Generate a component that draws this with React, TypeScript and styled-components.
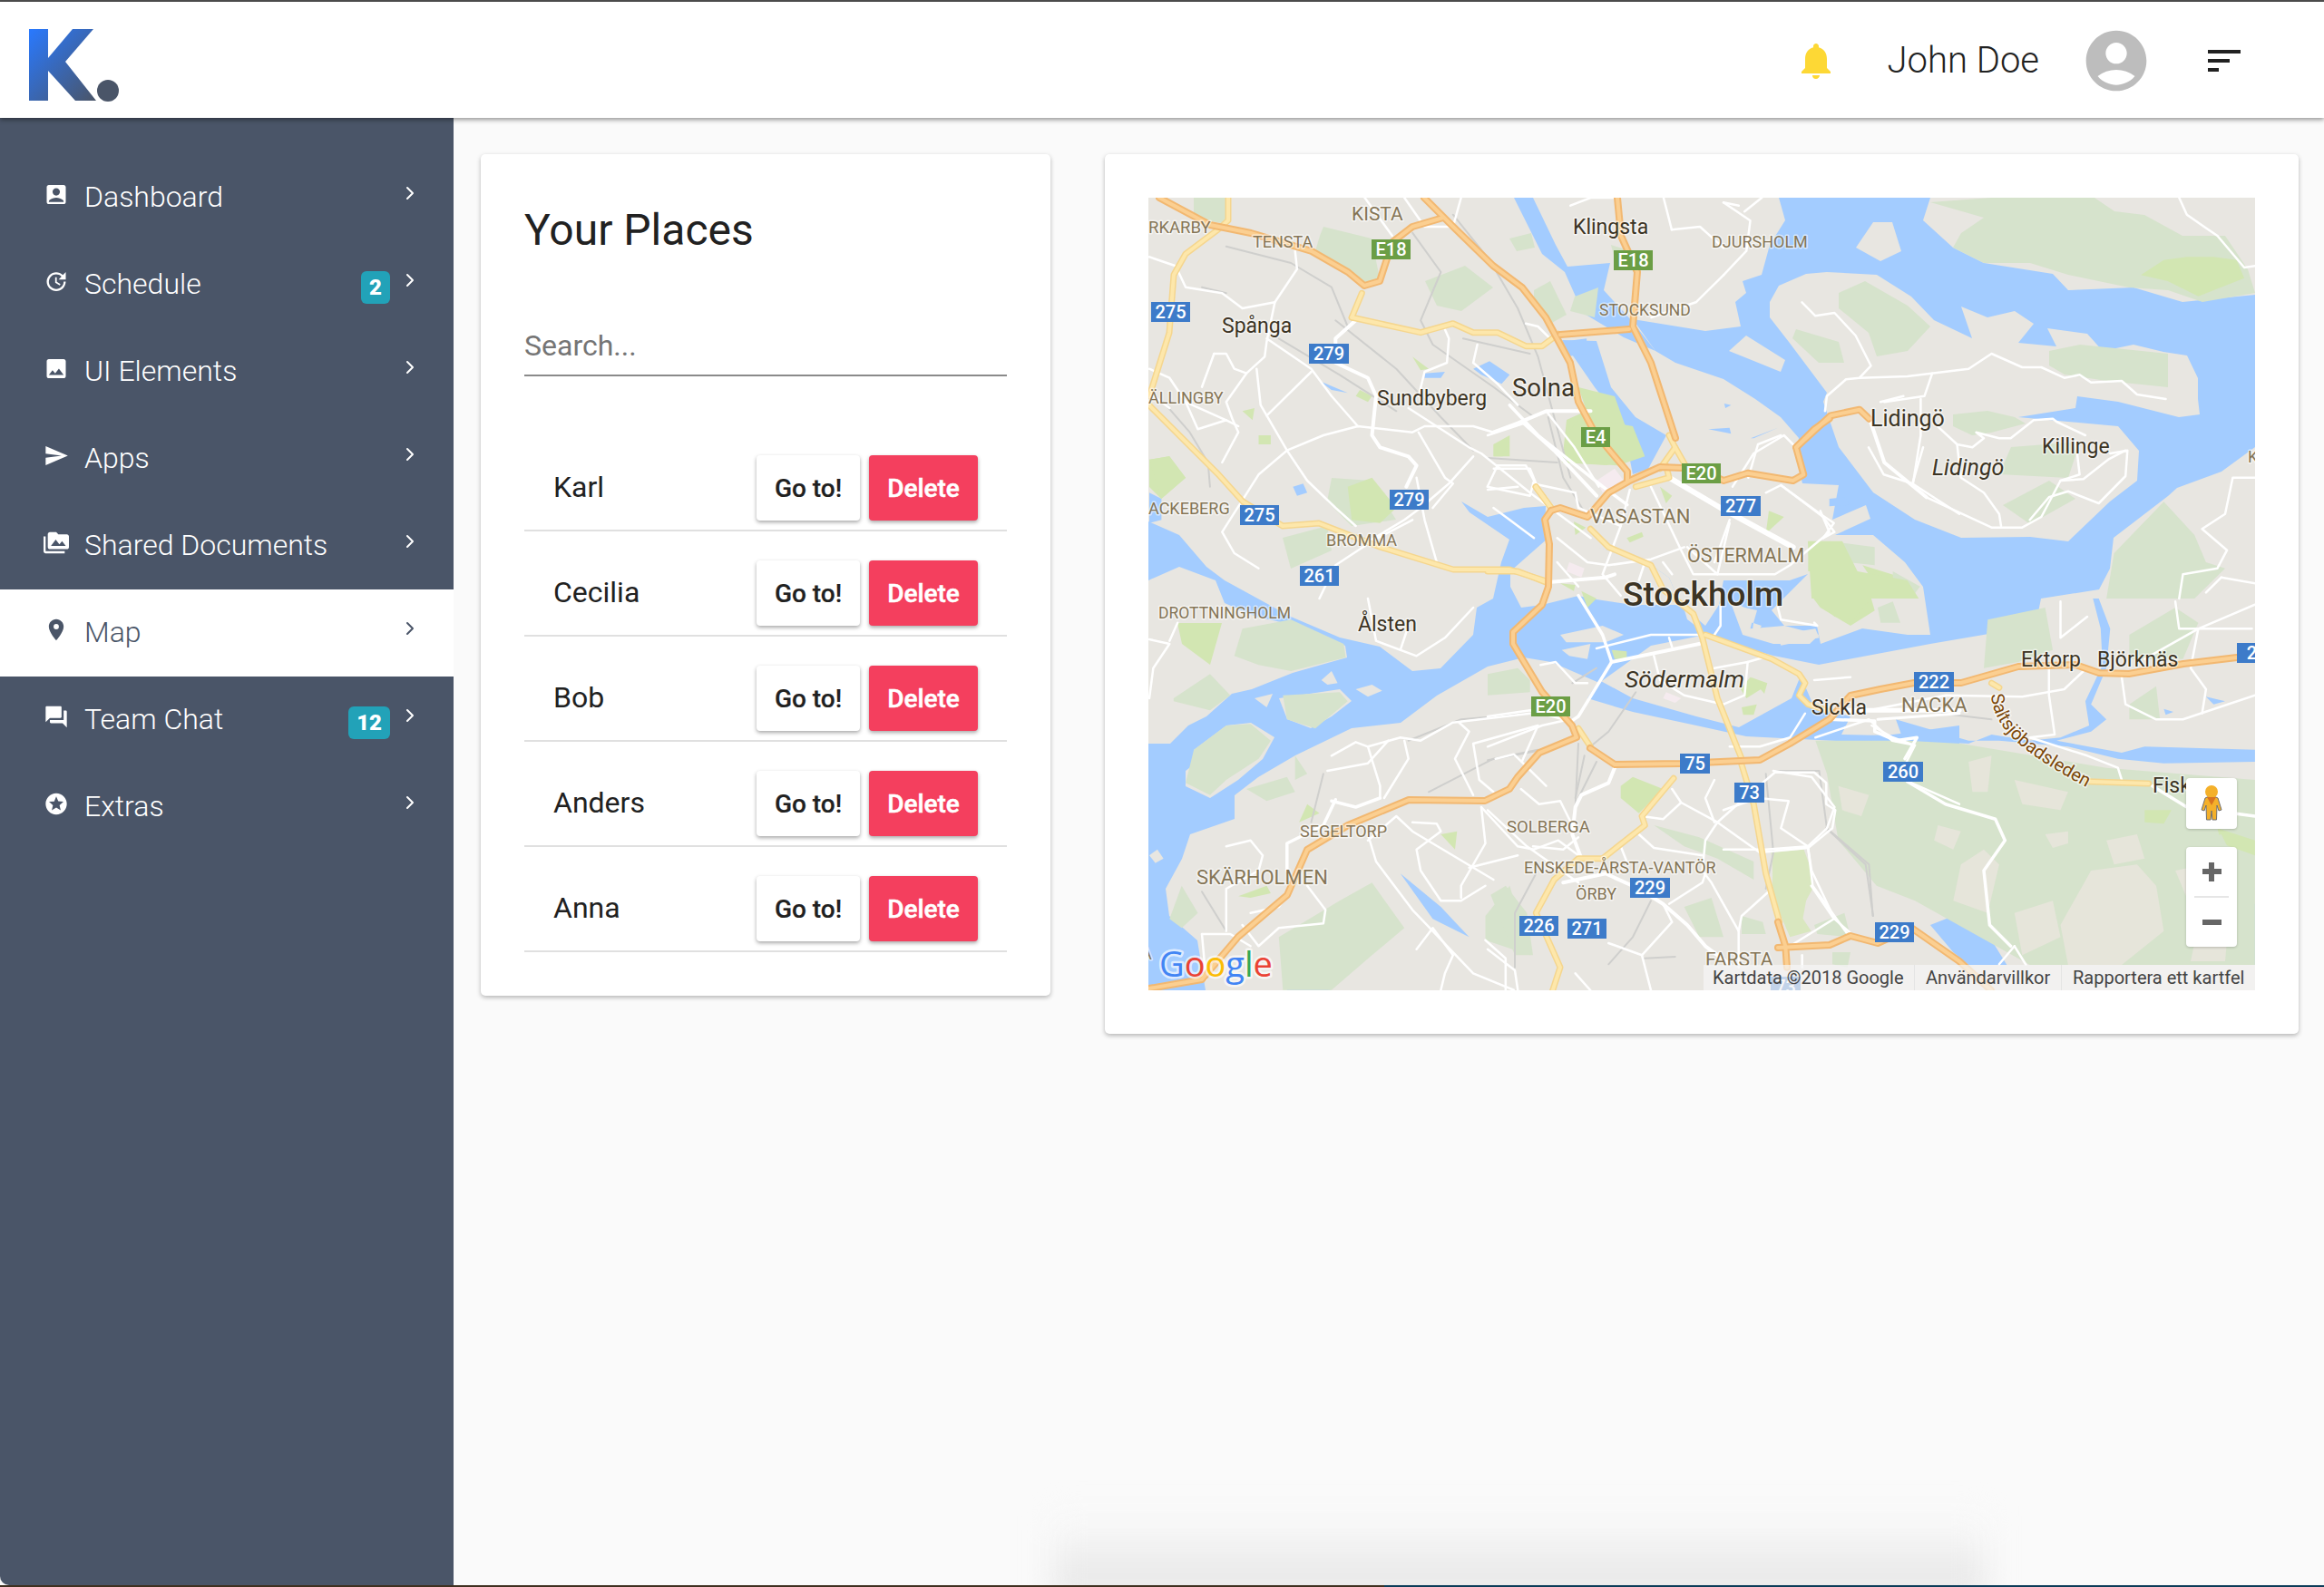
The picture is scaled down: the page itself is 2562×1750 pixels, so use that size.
import React from "react";
import styled, { createGlobalStyle } from "styled-components";
import {
  MdAccountBox, MdUpdate, MdPhoto, MdSend, MdPermMedia, MdPlace, MdForum, MdStars,
  MdNotifications, MdAccountCircle, MdSort,
} from "react-icons/md";
import { ChevronRight } from "lucide-react";

const GlobalStyle = createGlobalStyle`
  html, body { margin: 0; padding: 0; background: #fafafa; }
  body { font-family: Roboto, "Liberation Sans", sans-serif; color: #212121; }
  * { box-sizing: border-box; }
`;

const Page = styled.div`
  width: 2562px; height: 1750px; display: flex; flex-direction: column;
  overflow: hidden; position: relative; background: #fafafa;
`;
const TopLine = styled.div`height: 2px; background: #4f4f4f; flex: none;`;
const Header = styled.header`
  height: 128px; flex: none; background: #fff; display: flex; align-items: center;
  padding: 0 86px 0 32px; position: relative; z-index: 3;
  box-shadow: 0 2px 5px rgba(0,0,0,.42);
`;
const Logo = styled.svg`width: 100px; height: 128px; flex: none; margin-top: 3px;`;
const HeaderRight = styled.div`margin-left: auto; display: flex; align-items: center;`;
const BellIcon = styled(MdNotifications)`color: #fdd835; font-size: 48px; margin-right: 55px; margin-top: 2px;`;
const UserName = styled.span`font-size: 40px; font-weight: 300; color: #212121; margin-right: 45px; line-height: 48px; padding-top: 2px;`;
const AvatarIcon = styled(MdAccountCircle)`color: #bdbdbd; font-size: 80px; margin-right: 55px; margin-top: 2px;`;
const SortIcon = styled(MdSort)`color: #212121; font-size: 48px; margin-top: 2px;`;

const Body = styled.div`flex: 1; display: flex; min-height: 0;`;
const Sidebar = styled.nav`
  width: 500px; flex: none; background: #4a5568; padding-top: 40px;
  border-bottom-left-radius: 10px;
`;
const NavRow = styled.div<{ $active?: boolean }>`
  height: 96px; display: flex; align-items: center; padding: 0 36px 2px 48px;
  background: ${(p) => (p.$active ? "#fff" : "transparent")};
  color: ${(p) => (p.$active ? "#4a5568" : "#fff")};
`;
const NavIcon = styled.span`
  width: 28px; display: flex; justify-content: center; margin-right: 17px; margin-top: -6px; flex: none;
  font-size: 29px;
`;
const NavLabel = styled.span`font-size: 32px; font-weight: 300; flex: 1; line-height: 40px; white-space: nowrap;`;
const Badge = styled.span`
  height: 36px; min-width: 32px; padding: 0 9px; border-radius: 6px; background: #22a2b8; color: #fff;
  font-size: 24px; font-weight: 900; display: flex; align-items: center; justify-content: center;
  margin-right: 10px; margin-top: 7px;
`;
const Chevron = styled(ChevronRight)`flex: none; margin-top: -8px;`;

const Main = styled.main`
  flex: 1; position: relative; overflow: hidden; display: flex; align-items: flex-start;
  gap: 60px; padding: 40px 0 0 30px;
`;
const DockShadow = styled.div`
  position: absolute; left: 660px; bottom: -14px; width: 1030px; height: 90px;
  background: linear-gradient(to top, #e4e4e4, #fafafa); filter: blur(16px);
`;
const Card = styled.section<{ $w: number }>`
  width: ${(p) => p.$w}px; flex: none; background: #fff; padding: 48px; border-radius: 5px;
  box-shadow: 0 2px 5px rgba(0,0,0,.28); position: relative;
`;
const Title = styled.h2`margin: 8px 0 0; font-size: 48px; font-weight: 400; line-height: 56px; color: #212121;`;
const Search = styled.input`
  display: block; width: 100%; margin-top: 80px; height: 53px; padding: 0 0 13px; border: 0;
  border-bottom: 2px solid #8a8a8a; font: 300 32px/38px Roboto, sans-serif; outline: none; background: transparent;
  &::placeholder { color: #757575; opacity: 1; font-weight: 400; }
`;
const List = styled.div`margin-top: 55px;`;
const Row = styled.div`
  height: 116px; padding: 32px 32px 10px; display: flex; align-items: center;
  border-bottom: 2px solid #e0e0e0;
`;
const Name = styled.span`flex: 1; font-size: 32px; font-weight: 400; color: #212121; margin-top: -2px;`;
const Btn = styled.button<{ $danger?: boolean }>`
  height: 72px; width: ${(p) => (p.$danger ? 120 : 114)}px; border: 0; border-radius: 4px; padding: 0;
  margin-left: ${(p) => (p.$danger ? 10 : 0)}px;
  font: 500 28px Roboto, sans-serif;
  -webkit-text-stroke: ${(p) => (p.$danger ? ".5px" : ".2px")};
  background: ${(p) => (p.$danger ? "#f43f5e" : "#fff")};
  color: ${(p) => (p.$danger ? "#fff" : "#212121")};
  box-shadow: 0 2px 4px rgba(0,0,0,.35);
`;

const MapFrame = styled.div`width: 1220px; height: 874px; position: relative; overflow: hidden; background: #e8e6e1;`;
const MapSvg = styled.svg`display: block; width: 1220px; height: 874px;`;
const Poly = styled.polygon<{ $c: string }>`fill: ${(p) => p.$c};`;
const Road = styled.polyline<{ $c: string; $w: number }>`
  fill: none; stroke: ${(p) => p.$c}; stroke-width: ${(p) => p.$w}; stroke-linejoin: round; stroke-linecap: round;
`;
const Label = styled.text<{ $size: number; $brown?: boolean; $italic?: boolean; $bold?: boolean }>`
  font-family: Roboto, sans-serif; font-size: ${(p) => p.$size}px;
  font-style: ${(p) => (p.$italic ? "italic" : "normal")};
  font-weight: ${(p) => (p.$bold ? 500 : 400)};
  fill: ${(p) => (p.$brown ? "#857556" : "#3c3424")};
  paint-order: stroke; stroke: rgba(255,255,255,.55); stroke-width: 3px; stroke-linejoin: round;
`;
const ShieldBox = styled.rect<{ $green?: boolean }>`fill: ${(p) => (p.$green ? "#6b9e45" : "#3d7bc9")};`;
const ShieldText = styled.text`
  font-family: Roboto, sans-serif; font-size: 20px; font-weight: 500; fill: #fff; text-anchor: middle;
`;
const RouteLabel = styled.text`
  font-family: Roboto, sans-serif; font-size: 20px; fill: #7a4608;
  paint-order: stroke; stroke: rgba(255,255,255,.6); stroke-width: 3px;
`;
const GoogleMark = styled.text`
  font-family: "Open Sans", Roboto, sans-serif; font-size: 38px; font-weight: 400;
  paint-order: stroke; stroke: rgba(255,255,255,.65); stroke-width: 5px; stroke-linejoin: round;
`;
const Attribution = styled.div`
  position: absolute; right: 0; bottom: 0; width: 608px; height: 28px; background: rgba(245,245,245,.72);
  display: flex; align-items: center; font-size: 20px; color: #444; white-space: nowrap;
`;
const AttrItem = styled.span<{ $w: number; $last?: boolean }>`
  width: ${(p) => p.$w}px; padding-left: ${(p) => (p.$w === 233 ? 10 : 12)}px; line-height: 28px;
  border-right: ${(p) => (p.$last ? "0" : "1px solid #e4e4e4")};
`;
const MapControl = styled.div`
  position: absolute; right: 20px; width: 56px; background: #fff; border-radius: 4px;
  box-shadow: 0 1px 3px rgba(0,0,0,.2); display: flex; flex-direction: column; align-items: center;
`;
const PegBox = styled(MapControl)`top: 640px; height: 56px; justify-content: center;`;
const ZoomBox = styled(MapControl)`top: 716px; height: 110px;`;
const ZoomCell = styled.div`height: 54px; width: 100%; display: flex; align-items: center; justify-content: center; position: relative;`;
const ZoomRule = styled.div`width: 38px; height: 2px; background: #e6e6e6; flex: none;`;
const ZoomBar = styled.span`width: 21px; height: 6px; background: #666; display: block;`;
const ZoomBarV = styled.span`width: 6px; height: 21px; background: #666; display: block; position: absolute;`;

const BottomStrip = styled.div`height: 2px; flex: none; display: flex;`;
const StripDesk = styled.div`width: 1526px; background: #3f3020;`;
const StripTeal = styled.div`flex: 1; background: #0c3c58;`;

/* map coordinate helpers: every source list is given in a local sketch space and mapped into page space */
const conv = (ox: number, oy: number, sx: number, sy: number) => (s: string) =>
  s.trim().split(/\s+/).map((p) => {
    const [x, y] = p.split(",").map(Number);
    return `${(ox + x / sx).toFixed(1)},${(oy + y / sy).toFixed(1)}`;
  }).join(" ");
const A = conv(1200, 160, 2.24, 3);
const B = conv(1900, 160, 2.369, 3);
const C = conv(1200, 660, 2.24, 3);
const D = conv(1900, 660, 2.369, 3);
const E = conv(1640, 460, 3, 3);
const F = conv(1640, 800, 3, 3);

const WATER = "#a3ccff";
const LAND = "#e8e6e1";
const PARK = "#d6e3cc";
const BRIGHT = "#d2e6b2";
const PATCH = "#e6e5da";

const water = [
  "1961,218 2128,218 2120,243 2153,273 2187,290 2263,302 2280,320 2352,317 2406,333 2486,325 2486,493 2449,520 2400,538 2390,547 2330,593 2326,627 2314,650 2250,660 2246,680 2204,697 2128,710 2005,733 1955,723 1870,700 1880,690 1895,667 1900,640 1973,640 1993,633 1953,673 1967,690 2003,690 2007,710 2053,693 2103,700 2128,700 2120,647 2100,620 2065,590 2023,590 2062,572 2057,557 2020,573 2027,535 1987,533 1980,503 1983,483 1963,460 1935,440 1900,418 1847,400 1825,387 1800,352 1880,365 1919,360 1913,333 1925,323 1921,310 1942,303 1951,270 1968,243",
  "1266,575 1300,590 1330,625 1350,640 1423,680 1477,703 1521,713 1557,740 1588,737 1624,700 1628,670 1646,660 1655,620 1664,595 1620,565 1611,553 1640,570 1680,560 1704,558 1703,590 1773,607 1820,623 1840,637 1853,667 1880,690 1880,700 1820,712 1763,753 1710,730 1680,725 1640,735 1584,767 1544,797 1490,803 1428,833 1387,857 1361,877 1361,903 1312,920 1303,947 1285,980 1289,1010 1320,1037 1329,1092 1266,1092",
  "1669,218 1690,218 1715,270 1728,294 1775,290 1768,320 1800,355 1825,387 1790,372 1745,345 1725,300 1700,280",
  "1722,375 1760,376 1776,427 1803,460 1837,480 1817,517 1800,523 1789,467 1758,427",
  "1763,750 1800,770 1870,790 1917,802 1975,770 1985,745 2000,780 2040,790 2030,810 2160,813 2160,830 2045,818 1925,812 1870,800 1800,785 1750,770",
  A("1170,650 1230,640 1230,690 1180,700"),
  A("950,740 990,715 1040,760 1020,790 970,760"),
  A("830,755 880,750 870,770 830,770"),
  A("150,1150 180,1170 180,1240 150,1250"),
  A("505,1130 530,1120 540,1150 515,1160"),
  A("490,1340 530,1320 530,1350 500,1370"),
  A("570,780 640,820 600,810"),
  D("980,0 1010,100 1000,230 960,350 1000,400 960,440 870,470 1040,510 1100,490 1388,500 1388,540 1150,545 1030,530 900,490 720,470 640,470 450,400 470,470 280,460 500,470 640,480 700,450 800,470 880,460 955,420 945,340 990,220 985,100 965,0"),
  D("540,640 600,570 650,640 710,720 650,690 610,660"),
  D("450,600 520,760 530,830 470,790 480,700"),
  D("540,1080 620,1040 700,1130 740,1212 640,1212 600,1170"),
  D("1330,1020 1388,1010 1388,1212 1320,1140"),
  D("585,855 610,860 620,895 590,890"), D("770,860 825,930 800,925"), D("815,1040 850,1040 830,1065"),
  D("1140,1050 1165,1050 1160,1070"), D("1340,890 1388,960 1360,980"), D("1285,780 1305,780 1300,830"),
  D("1260,325 1310,340 1280,350"), D("1150,365 1175,375 1155,385"),
  C("770,910 870,1020 940,1120 850,1060"),
  C("490,1270 600,1295 490,1295"),
  E("1130,270 1180,265 1200,290 1130,295"),
  F("1360,190 1450,380 1460,400 1410,420 1370,360 1430,340 1380,250"),
  F("1420,430 1440,490 1420,470"),
  F("1520,430 1560,440 1560,470 1530,460"),
  F("1470,190 1560,150 1560,240"),
  F("1040,0 1100,40 1340,30 1560,0 1560,50 1350,55 1100,40"),
  B("2,855 20,860 5,870"),
  E("730,40 800,35 805,55"), E("870,70 960,35 880,70"),
];
const lands = [
  "1951,333 1961,315 1991,302 2014,300 2069,303 2107,327 2132,353 2174,373 2162,338 2191,350 2221,343 2242,357 2225,378 2267,382 2257,362 2301,368 2318,387 2352,380 2385,388 2411,392 2423,417 2423,440 2425,457 2402,460 2335,443 2290,437 2288,450 2225,460 2335,470 2358,497 2356,530 2326,553 2280,597 2238,592 2162,593 2111,573 2065,543 2027,493 2010,443 2014,433 1972,377 1951,350",
  "2065,245 2086,245 2096,277 2073,288 2046,273",
  "1906,387 1925,370 1968,397 1963,410 1921,393",
  "1266,640 1300,625 1340,640 1350,665 1385,680 1430,690 1483,712 1485,725 1425,742 1380,760 1358,765 1330,790 1310,800 1290,820 1266,820",
  "1316,827 1352,800 1379,797 1405,813 1392,837 1365,860 1334,880 1307,867 1307,850 1320,840",
  "1410,770 1477,760 1490,773 1468,790 1445,803 1419,793",
  C("575,270 600,240 615,280 590,285"), C("660,300 700,285 725,305 690,325"), C("410,330 455,315 440,360"),
  C("170,830 185,860 165,875 150,850"),
  "1707,593 1665,630 1665,647 1677,670 1700,667 1740,657 1753,660 1800,667 1853,667 1840,637 1820,623 1773,607 1717,590",
  "1857,673 1870,673 1873,693 1860,683",
  "1910,667 1937,673 1933,687 1917,683", "1933,687 1942,690 1937,698 1932,695", "1960,700 1973,697 1975,708 1965,708",
  E("240,720 380,690 450,720 390,745 260,745"), E("245,770 340,750 330,800 270,790"),
  D("15,0 80,50 70,100 160,90 250,120 225,150 130,150 50,120"),
  D("140,120 240,100 250,130 150,155"),
];
const parks: [string, string][] = [
  ["2128,223 2195,218 2309,218 2331,233 2364,237 2406,260 2453,260 2478,297 2486,323 2428,333 2390,320 2347,317 2280,303 2238,290 2187,290 2153,273 2162,257 2187,240", PARK],
  ["2027,323 2056,310 2103,337 2128,360 2103,387 2069,393 2060,367 2027,340", PARK],
  ["1980,363 2027,377 2033,400 2005,400 1976,373", PARK],
  ["2259,387 2293,380 2390,390 2390,427 2322,420 2276,413 2259,403", PARK],
  ["2153,457 2191,453 2221,460 2233,467 2195,477 2174,480 2153,470", PARK],
  ["2217,493 2293,487 2280,527 2204,523", PARK],
  ["2208,557 2259,530 2288,550 2238,578", PARK],
  [B("1090,430 1150,380 1210,370 1280,370 1340,380 1360,440 1300,470 1240,500 1160,450"), BRIGHT],
  [B("1020,1350 1150,1180 1230,1290 1260,1380 1310,1400 1230,1500 1000,1500"), PARK],
  ["1316,218 1352,218 1352,247 1316,240", PARK],
  ["1459,250 1512,263 1521,307 1504,317 1450,277 1455,260", PARK],
  ["1571,310 1615,293 1646,317 1611,343 1584,337", PARK],
  ["1691,320 1709,310 1727,347 1709,357 1691,337", PARK],
  ["1664,263 1688,257 1692,273 1672,277", PARK],
  ["1736,327 1762,317 1758,350 1731,343", PARK],
  [A("1290,330 1340,350 1340,400 1300,380"), PARK],
  ["1740,427 1780,437 1798,487 1812,500 1771,513 1722,510 1727,463 1749,453", BRIGHT],
  ["1267,507 1289,503 1307,527 1280,550 1267,537", BRIGHT],
  ["1468,527 1512,530 1539,573 1490,580 1463,553", PARK],
  [A("640,1130 700,1100 760,1200 720,1250 650,1240"), BRIGHT],
  ["1414,593 1463,580 1468,607 1423,627", PARK],
  [A("150,1040 200,1030 240,1100 180,1170"), BRIGHT],
  [A("670,810 700,830 690,850 660,830"), BRIGHT],
  [A("800,700 840,740 820,745"), BRIGHT],
  [A("1000,990 1040,960 1040,1030 1000,1030"), BRIGHT],
  [A("380,880 410,870 405,910"), BRIGHT],
  [A("420,960 450,960 450,990 420,990"), BRIGHT],
  ["1298,687 1347,687 1334,733 1303,710", BRIGHT],
  [C("380,100 500,70 630,150 635,195 500,240 420,220 360,190"), PARK],
  [C("210,330 300,250 350,320 300,370 210,340"), PARK],
  [C("260,500 340,420 400,415 450,470 420,530 340,600 300,650 240,610"), PARK],
  [C("480,320 620,310 640,340 560,430 490,400"), PARK],
  [C("390,630 490,590 510,640 440,670"), PARK],
  [C("510,520 540,580 510,600"), PARK],
  [C("470,1120 620,1000 700,940 780,1090 700,1180 600,1295 480,1295"), PARK],
  [C("980,1050 1040,950 1090,1180 980,1130"), PARK],
  [C("200,1060 230,950 270,1040 230,1090"), PARK],
  [C("370,985 440,950 450,975 400,990"), BRIGHT],
  [C("870,780 910,770 905,830"), BRIGHT],
  [C("540,680 570,710 520,740"), BRIGHT],
  [E("1060,430 1170,430 1190,510 1060,510"), BRIGHT],
  [E("1070,590 1260,570 1280,640 1200,690 1100,630"), BRIGHT],
  [E("1290,630 1340,610 1365,680 1300,680"), PARK],
  [E("1240,490 1370,530 1360,545 1260,520"), BRIGHT],
  [E("1130,410 1280,430 1280,490 1190,480"), PARK],
  [E("1340,510 1430,560 1400,600 1340,580"), PARK],
  [E("870,860 925,880 915,915"), BRIGHT],
  [E("840,960 890,950 880,985 845,985"), BRIGHT],
  [E("410,770 460,775 460,800 420,800"), BRIGHT],
  [E("300,10 310,0 480,30 520,130 430,160 250,150 260,60"), BRIGHT],
  [E("20,90 70,80 50,130 20,130"), BRIGHT],
  [E("570,230 610,260 590,285"), BRIGHT],
  [E("460,400 510,380 515,395 470,415"), BRIGHT],
  [E("930,310 980,330 920,385"), BRIGHT],
  [E("285,345 325,365 290,390"), BRIGHT],
  [E("310,575 360,600 330,630"), BRIGHT],
  [E("240,550 290,555 285,575"), BRIGHT],
  [E("0,850 100,830 140,870 140,910 0,920"), PARK],
  [F("440,200 480,170 580,210 500,290 440,240"), BRIGHT],
  [F("945,420 1070,460 1075,540 1030,620 1070,680 1000,700 940,560"), "#d9e7bf"],
  [F("650,600 740,570 780,700 700,700"), PARK],
  [F("10,560 60,530 130,620 150,760 90,760"), PARK],
  [F("550,330 700,370 880,450 880,510 760,440 650,400"), PARK],
  [F("1080,660 1180,620 1200,700 1090,690"), PARK],
  [F("840,630 910,650 920,690 840,690"), PARK],
  [F("1140,750 1200,750 1190,800 1140,790"), PARK],
  [D("240,470 480,470 620,480 1000,560 1388,600 1388,1212 1100,1212 800,1212 500,1000 400,950 300,800 270,580"), PARK],
  [D("960,900 1080,880 1130,950 1150,1100 1040,1212 900,1212 880,1080"), PATCH],
  [D("620,880 680,830 720,880 690,1040 600,1000"), PATCH],
  [D("840,780 900,770 900,810 860,825"), PATCH],
  [D("640,540 700,520 690,640 650,640"), PATCH],
  [D("760,600 900,640 880,700 780,680"), PATCH],
  [D("1000,800 1080,780 1100,860 1020,880"), PATCH],
  [D("1180,900 1260,880 1300,980 1220,1020"), PATCH],
  [D("300,620 380,650 360,720 310,700"), PATCH],
  [D("560,750 620,770 600,830 550,800"), PATCH],
  [D("1240,1080 1320,1060 1310,1200 1220,1200"), PATCH],
  [D("760,1040 860,1000 880,1120 780,1180"), PATCH],
  [D("125,840 210,830 230,900 200,1110 170,1070 130,940"), "#d9e7bf"],
  [D("1100,700 1170,700 1150,745 1100,740"), BRIGHT],
  [D("1290,760 1388,800 1388,850 1300,810"), BRIGHT],
  [D("1060,350 1130,290 1140,400 1060,400"), PARK],
  [D("1240,800 1300,780 1340,880 1280,900"), PARK],
  [D("690,70 840,30 860,170 770,210 680,230"), PARK],
  [D("1060,120 1180,30 1240,80 1200,200 1060,200"), PARK],
  [D("240,0 385,0 340,70 290,60"), BRIGHT],
  [D("70,260 110,290 60,330 45,300"), BRIGHT],
  [B("220,1310 310,1310 350,1410 480,1440 510,1500 230,1500"), BRIGHT],
];
const rail = [
  A("340,335 500,390 600,470 640,600"), A("280,470 340,490"),
  A("800,290 870,420 820,580 850,660 1000,800 1100,900"),
  A("900,230 990,380 1060,540 1110,700 1150,900 1190,1100"),
  A("610,580 760,740 870,900 950,1010"), A("470,640 620,760 760,880"),
  A("185,850 250,950 295,1050 300,1130"),
  A("925,640 1090,690"),
  E("200,0 250,200 330,330"), E("490,910 400,1040 340,1090"), E("360,830 280,880"),
  E("0,135 230,150"),
  F("300,60 290,270"), F("320,100 290,240"), F("360,120 300,240"), F("0,115 240,70"),
  F("920,160 945,420 920,540"), F("160,490 90,620 90,800"), F("1120,340 1250,460 1275,630"),
  F("540,580 480,700 400,790"), F("520,770 620,765"),
  C("790,470 920,400 1090,380"), C("580,580 550,740"), C("840,640 1000,530 1110,500"),
  C("280,970 340,1100"),
  D("130,570 250,570 270,760 380,880 390,1050"),
  D("570,380 700,400"),
];
const white: [string, number][] = [
  ...[
    "510,350 515,410 460,520 440,650 435,700 390,755 340,850 355,905 370,950 330,1050",
    "440,640 550,740 600,830 665,930", "550,750 440,895", "310,690 340,690 360,740 390,755", "310,690 280,800",
    "415,740 425,860 490,1010 540,1110 610,1200 660,1260",
    "490,1010 580,960 665,930 800,950 830,930 950,930 1000,950",
    "880,610 890,640 885,720 830,750 815,830",
    "150,370 215,400 240,470 330,490 380,540 460,520", "150,740 200,770 240,850 340,910 370,930",
    "240,850 270,940 340,910", "490,1010 420,1090 330,1280 360,1350 420,1400",
    "800,1240 700,1310 610,1390 570,1500", "815,950 880,1100 900,1120 850,1200",
    "790,870 940,1000 970,1020 1090,1150 1240,1300",
    "950,1030 890,1120 820,1200 780,1240 680,1320",
    "1010,1060 1080,1060 1100,1110 1090,1160 985,1130 1010,1060",
    "960,660 950,720 1010,790 1060,860", "1080,590 1110,600 1140,640", "680,170 750,300",
    "780,174 830,270 900,270 920,174", "1190,200 1240,174 1300,174", "1440,280 1510,270 1568,340",
    "1440,280 1420,174", "1568,430 1500,520 1390,570", "1130,880 1200,1000 1260,1130",
    "150,820 200,870", "810,1100 830,1240 860,1380",
    "1100,1300 1040,1240 1000,1200",
  ].map((s): [string, number] => [A(s), 2.5]),
  [A("660,580 610,640 610,720 690,770 710,830 700,960 720,1000 790,1030 810,1060 785,1130"), 4],
  [A("1000,950 1060,920 1130,880 1240,880"), 4],
  [A("1040,860 1110,960 1270,1130 1330,1190"), 3.5],
  ...[
    "0,60 120,20", "20,170 140,170 160,220", "150,220 290,250", "290,250 300,300 440,360 380,520 440,590",
    "470,240 440,360", "540,230 640,440 680,520 950,520 1000,490 1130,380 1100,310",
    "810,230 880,120 980,60 1020,100", "800,340 750,480", "920,250 970,225 1100,320 1145,350 1110,400",
    "0,240 100,230", "360,765 540,720 700,720", "600,730 610,760",
    "550,790 570,870 650,920 780,950 850,920 860,810 750,830", "860,810 930,790",
    "770,620 770,690 750,720", "960,630 970,670 1090,690 1080,680", "0,990 140,970 250,1000",
    "175,820 225,810 290,880 330,880", "0,1090 180,1020 270,1000", "1050,980 1000,1060 900,1090 800,1090",
    "1080,870 1200,860", "1260,100 1310,190 1405,220", "1405,220 1560,320", "1440,100 1405,220",
    "230,400 330,480 400,490 540,470 650,430", "500,540 520,480", "660,430 760,520 800,350",
    "580,480 610,520", "230,480 300,560",
  ].map((s): [string, number] => [E(s), 2.5]),
  [E("120,20 220,110 360,260"), 4],
  [E("600,200 770,300 1010,430"), 6],
  [E("210,545 390,530 420,520"), 4],
  [E("300,590 380,720 410,810 300,990 270,1010"), 3.5],
  [E("410,810 700,750"), 4],
  [E("1130,1000 1280,1005 1280,1040 1350,1070 1420,1060 1380,1130"), 3.5],
  [E("1190,970 1560,970"), 5],
  [E("1290,1000 1560,980"), 3],
  ...[
    "150,135 200,150 160,230 150,330", "220,80 200,140", "690,0 710,140 810,190 880,130 950,30", "770,170 790,90",
    "600,520 660,475 690,490 770,460 820,470 900,410 1090,380", "590,570 690,545 740,470",
    "690,490 720,620 720,660", "780,470 790,530 730,660", "915,410 940,440 905,530 950,650",
    "950,480 1110,420 1070,540", "950,480 965,600 1000,640", "1005,530 1050,515 1130,620",
    "340,820 400,800 430,850 420,900 340,960 340,1100", "690,780 710,870 800,1030 950,1240 1050,1295",
    "690,800 760,720 800,770 1000,930", "800,740 860,745 870,770 810,830 820,900 870,1000 920,1000 980,950",
    "970,690 980,810 920,950 920,990", "970,690 1060,820 1100,830 1160,800 1210,850", "1060,850 940,890",
    "280,1110 350,1110 400,1150", "280,1110 290,1260", "400,1040 470,1020 480,1000",
    "380,1080 420,1150 470,1090 580,1075 585,1030 540,950", "810,1160 850,1090 900,1180 880,1240 870,1295",
    "980,1130 1030,1190 1030,1295",
  ].map((s): [string, number] => [C(s), 2.5]),
  [C("600,670 660,690 720,660"), 3.5],
  [C("610,665 580,750 490,810 490,900"), 3.5],
  ...[
    "0,280 130,400 300,520", "150,400 250,410 300,370", "110,210 170,260 240,250 290,350",
    "610,210 640,255 760,320 900,420 1060,405 1140,340 1150,280 1120,260 1120,190 1080,155 950,155 850,240 760,320 720,380 710,480 740,520 830,680 830,800",
    "500,360 550,405 710,430", "440,400 460,450", "600,590 710,520 720,490", "580,590 610,650 510,760 400,720",
    "940,540 840,630 830,680", "1060,405 1075,530 1190,690", "1070,530 1145,640 1080,680 1000,730",
    "750,180 720,240 750,320", "1380,110 1410,65 1340,40 1270,0", "1390,185 1560,260", "0,740 90,810 100,876",
    "290,820 340,876", "510,760 540,876", "1040,760 1040,800", "640,255 580,310 510,300",
  ].map((s): [string, number] => [F(s), 2.5]),
  [F("420,140 400,190 310,230 290,270 280,360 310,440"), 4],
  [F("250,520 390,490 500,540 580,590 660,660 720,730 800,790"), 4],
  ...[
    "205,520 240,565 290,555 345,630 385,730 355,770 320,775 270,830 265,880",
    "355,770 480,765 640,740 700,690 780,735 830,735 890,770 930,760 960,785 1040,780 1080,825 1155,840",
    "530,1165 700,1265 780,1265 830,1230 880,1110 940,1105 1005,1040 1050,1010",
    "1190,174 1210,230 1255,270 1290,300 1360,405 1388,400", "0,430 60,350 70,250 0,190",
    "1388,1100 1330,1100 1310,1220 1250,1270 1315,1340 1290,1400 1200,1420 1190,1500",
    "420,850 525,830 545,755", "515,840 515,960 495,1120", "410,850 470,830", "550,920 610,990 650,1000 680,970 660,950 720,970 750,970 810,910 860,905 870,915 945,960",
    "610,990 620,1100 680,1150 720,1220 725,1260", "920,980 930,1090 880,1110", "1010,1020 1055,1010 1050,1095 980,1185 900,1145 850,1165 800,1240",
    "100,174 55,220", "0,190 40,200", "150,1125 260,1230 290,1280 260,1300", "150,960 90,990 65,1100",
    "1300,1430 1390,1450", "1300,1430 1260,1480",
  ].map((s): [string, number] => [B(s), 2.5]),
  [B("380,900 420,1050 530,1165"), 4],
  ...[
    "240,460 380,400 440,470 500,485 470,560", "380,370 580,320 780,325 890,300 940,240",
    "850,235 850,320 865,450 800,460", "800,460 950,520 1030,560 1040,600", "1040,260 1050,350 1130,400 1200,400 1388,320",
    "1240,100 1220,230 1260,300 1250,380", "1388,20 1240,100 1100,200", "760,1150 720,1210",
    "0,830 110,830 220,820 270,760 290,690 230,590 130,570", "220,820 230,900 290,1060 330,1105",
    "0,700 90,660 170,670 150,760 220,820", "880,10 880,130 950,60", "1180,10 1190,100 1380,100",
  ].map((s): [string, number] => [D(s), 2.5]),
  [D("480,605 580,680 710,730 735,800 680,900 695,1080 750,1150"), 3.5],
  [D("1120,620 1210,690 1388,720"), 3.5],
  [D("760,1150 790,1212"), 2.5],
];
const HWY = "#f2b871";
const HWY_IN = "#fbcf91";
const YEL = "#f5d68e";
const YEL_IN = "#fde7ab";
const yellow = [
  A("650,570 820,620 900,590 950,620 1010,620 1080,665 1120,665 1160,625"),
  A("675,490 650,570"),
  "1354,218 1354,243 1343,253 1307,280 1294,303 1289,367 1267,437",
  "1267,447 1307,487 1343,523 1370,553 1414,580 1454,577 1521,603 1602,628 1664,628 1702,640",
  E("0,510 100,510 190,545"),
  E("160,230 210,300"),
  "1693,537 1710,560",
  E("340,370 400,430 540,490 580,570 680,650 710,730 760,930 840,1130"),
  F("840,130 880,260 920,490 965,650"),
  F("615,175 510,300 520,330 380,440 300,440 220,510 160,620 240,800 215,876"),
  E("600,60 620,100 570,170"), E("620,100 660,170"), E("490,230 600,200 590,160"),
  E("720,720 940,800 1030,850 1050,880 1030,920 1060,950 1120,970"),
  E("300,1030 340,1090"),
  D("950,605 1110,612"),
  D("700,280 720,295"),
];
const highway = [
  "1278,218 1334,248 1379,257 1446,277 1486,300 1504,315 1521,310 1535,267 1557,250 1591,240",
  "1570,218 1602,250 1646,293 1678,317 1704,350 1731,400 1740,443 1758,477 1794,520 1794,530",
  "1783,218 1787,260 1805,300 1800,360 1820,400 1847,483",
  E("340,320 400,250 470,210 570,165 700,170 780,210 860,185 1010,210 1045,190 1020,100 1080,40 1130,5"),
  B("190,1000 280,895 355,875 380,905"),
  "1710,563 1703,573 1708,600 1707,647 1700,667 1668,697 1668,710 1700,763 1733,800 1738,813 1697,830 1673,857 1664,870 1637,883 1553,882 1486,910 1441,937 1419,987 1365,1033 1325,1080 1267,1090",
  "1710,563 1720,560 1750,570 1753,567",
  "1753,825 1780,843 1853,842 1940,838 1973,820 2017,793 2040,767 2073,760 2110,753 2162,753 2225,735 2288,733 2314,742 2347,743 2407,732 2466,725 2486,723",
  "1720,369 1796,363",
  F("960,650 985,730 990,800"),
  "1960,1045 2017,1042 2040,1032 2070,1040 2107,1023 2160,1060 2195,1092",
];
const districts: [string, number, number, number][] = [
  ["RKARBY", 1266, 257, 18.5], ["TENSTA", 1381, 273, 18], ["KISTA", 1490, 243, 21], ["STOCKSUND", 1763, 348, 17.5],
  ["DJURSHOLM", 1887, 273, 18], ["ÄLLINGBY", 1266, 445, 18], ["ACKEBERG", 1266, 567, 18], ["BROMMA", 1462, 602, 18],
  ["DROTTNINGHOLM", 1277, 682, 17.5], ["SEGELTORP", 1433, 923, 18], ["SKÄRHOLMEN", 1319, 975, 22], ["SOLBERGA", 1661, 918, 18.5],
  ["ENSKEDE-ÅRSTA-VANTÖR", 1680, 963, 18], ["ÖRBY", 1737, 992, 18], ["FARSTA", 1880, 1065, 21], ["ÖSTERMALM", 1860, 620, 21.5],
  ["NACKA", 2096, 785, 22], ["VASASTAN", 1753, 577, 22], ["K", 2478, 510, 18], ["A", 1258, 1058, 18],
];
const towns: [string, number, number, number][] = [
  ["Klingsta", 1734, 258, 23], ["Spånga", 1347, 367, 23], ["Sundbyberg", 1518, 447, 23], ["Solna", 1667, 437, 27.5],
  ["Lidingö", 2062, 470, 25], ["Killinge", 2251, 500, 23], ["Ålsten", 1497, 696, 23], ["Sickla", 1997, 788, 23],
  ["Ektorp", 2228, 735, 23], ["Björknäs", 2312, 735, 23], ["Fisk", 2373, 874, 23],
];
const shields: [string, number, number, number, boolean?][] = [
  ["275", 1269, 333, 43], ["279", 1443, 379, 44], ["279", 1532, 540, 43], ["275", 1367, 557, 43], ["261", 1433, 624, 43],
  ["277", 1897, 547, 44], ["222", 2110, 741, 44], ["75", 1852, 831, 33], ["73", 1912, 863, 33], ["260", 2076, 840, 44],
  ["229", 1797, 968, 44], ["226", 1675, 1010, 43], ["271", 1728, 1013, 43], ["229", 2067, 1017, 43], ["22", 2466, 709, 44],
  ["73", 1952, 1077, 33],
  ["E18", 1512, 264, 43, true], ["E18", 1779, 276, 43, true], ["E4", 1743, 471, 32, true],
  ["E20", 1854, 511, 43, true], ["E20", 1688, 768, 43, true],
];

const StockholmMap = () => (
  <MapSvg viewBox="1266 218 1220 874">
    <defs>
      <path id="saltsjo" d="M2195 766 C2198 800 2220 825 2300 868" />
    </defs>
    {water.map((p, i) => <Poly key={`w${i}`} $c={WATER} points={p} />)}
    {lands.map((p, i) => <Poly key={`l${i}`} $c={LAND} points={p} />)}
    {parks.map(([p, c], i) => <Poly key={`p${i}`} $c={c} points={p} />)}
    <Poly $c="#f5ebef" points={E("360,210 420,170 450,210 380,250")} />
    <Poly $c="#f5ebef" points={E("270,480 320,500 310,530 260,510")} />
    <Poly $c="#f5ebef" points={E("590,910 640,930 620,945 580,930")} />
    {rail.map((p, i) => <Road key={`r${i}`} $c="#cfcfcd" $w={2} points={p} />)}
    {white.map(([p, w], i) => <Road key={`s${i}`} $c="#fff" $w={w} points={p} />)}
    {yellow.map((p, i) => <Road key={`yo${i}`} $c={YEL} $w={7} points={p} />)}
    {yellow.map((p, i) => <Road key={`yi${i}`} $c={YEL_IN} $w={4} points={p} />)}
    {highway.map((p, i) => <Road key={`ho${i}`} $c={HWY} $w={8} points={p} />)}
    {highway.map((p, i) => <Road key={`hi${i}`} $c={HWY_IN} $w={4} points={p} />)}
    {districts.map(([t, x, y, s]) => <Label key={t + x} x={x} y={y} $size={s} $brown>{t}</Label>)}
    {towns.map(([t, x, y, s]) => <Label key={t + x} x={x} y={y} $size={s}>{t}</Label>)}
    <Label x={2130} y={524} $size={25} $italic>Lidingö</Label>
    <Label x={1791} y={758} $size={26.5} $italic>Södermalm</Label>
    <Label x={1789} y={668} $size={37} $bold>Stockholm</Label>
    <RouteLabel><textPath href="#saltsjo">Saltsjöbadsleden</textPath></RouteLabel>
    {shields.map(([t, x, y, w, g]) => (
      <g key={`${t}${x}`}>
        <ShieldBox x={x} y={y} width={w} height={22} $green={g} />
        <ShieldText x={x + w / 2} y={y + 18}>{t}</ShieldText>
      </g>
    ))}
    <GoogleMark x={1278} y={1077}>
      <tspan fill="#4285f4">G</tspan><tspan fill="#ea4335">o</tspan><tspan fill="#fbbc05">o</tspan>
      <tspan fill="#4285f4">g</tspan><tspan fill="#34a853">l</tspan><tspan fill="#ea4335">e</tspan>
    </GoogleMark>
  </MapSvg>
);

const Pegman = () => (
  <svg width="24" height="40" viewBox="0 0 24 40">
    <path d="M5 14 Q12 10 19 14 L23 27 L20 28 L18 22 L17.5 38 L13 38 L12 28 L11 38 L6.5 38 L6 22 L4 28 L1 27 Z" fill="#f4b02a" stroke="#6f6f6f" strokeWidth="1" />
    <circle cx="12" cy="7" r="7" fill="#f4b02a" />
    <path d="M7 13 L12 22 L17 13 Z" fill="#d8731f" />
  </svg>
);

const nav = [
  { label: "Dashboard", Icon: MdAccountBox },
  { label: "Schedule", Icon: MdUpdate, badge: "2" },
  { label: "UI Elements", Icon: MdPhoto },
  { label: "Apps", Icon: MdSend },
  { label: "Shared Documents", Icon: MdPermMedia },
  { label: "Map", Icon: MdPlace, active: true },
  { label: "Team Chat", Icon: MdForum, badge: "12" },
  { label: "Extras", Icon: MdStars },
];
const places = ["Karl", "Cecilia", "Bob", "Anders", "Anna"];

export default function App() {
  return (
    <Page>
      <GlobalStyle />
      <TopLine />
      <Header>
        <Logo viewBox="32 -2 100 128">
          <defs>
            <linearGradient id="kGrad" x1="0" y1="0" x2="1" y2="1">
              <stop offset="0" stopColor="#2979ff" />
              <stop offset="1" stopColor="#4a5568" />
            </linearGradient>
          </defs>
          <polygon fill="url(#kGrad)" points="32,26 53,26 53,58 80,26 103,26 72,62 106,105 83,105 53,72 53,105 32,105" />
          <circle cx="119" cy="94" r="12" fill="#4a5568" />
        </Logo>
        <HeaderRight>
          <BellIcon />
          <UserName>John Doe</UserName>
          <AvatarIcon />
          <SortIcon />
        </HeaderRight>
      </Header>
      <Body>
        <Sidebar>
          {nav.map(({ label, Icon, badge, active }) => (
            <NavRow key={label} $active={active}>
              <NavIcon><Icon /></NavIcon>
              <NavLabel>{label}</NavLabel>
              {badge && <Badge>{badge}</Badge>}
              <Chevron size={24} strokeWidth={2} />
            </NavRow>
          ))}
        </Sidebar>
        <Main>
          <DockShadow />
          <Card $w={628}>
            <Title>Your Places</Title>
            <Search placeholder="Search..." />
            <List>
              {places.map((n) => (
                <Row key={n}>
                  <Name>{n}</Name>
                  <Btn>Go to!</Btn>
                  <Btn $danger>Delete</Btn>
                </Row>
              ))}
            </List>
          </Card>
          <Card $w={1316}>
            <MapFrame>
              <StockholmMap />
              <PegBox><Pegman /></PegBox>
              <ZoomBox>
                <ZoomCell><ZoomBar /><ZoomBarV /></ZoomCell>
                <ZoomRule />
                <ZoomCell><ZoomBar /></ZoomCell>
              </ZoomBox>
              <Attribution>
                <AttrItem $w={233}>Kartdata ©2018 Google</AttrItem>
                <AttrItem $w={162}>Användarvillkor</AttrItem>
                <AttrItem $w={213} $last>Rapportera ett kartfel</AttrItem>
              </Attribution>
            </MapFrame>
          </Card>
        </Main>
      </Body>
      <BottomStrip><StripDesk /><StripTeal /></BottomStrip>
    </Page>
  );
}
